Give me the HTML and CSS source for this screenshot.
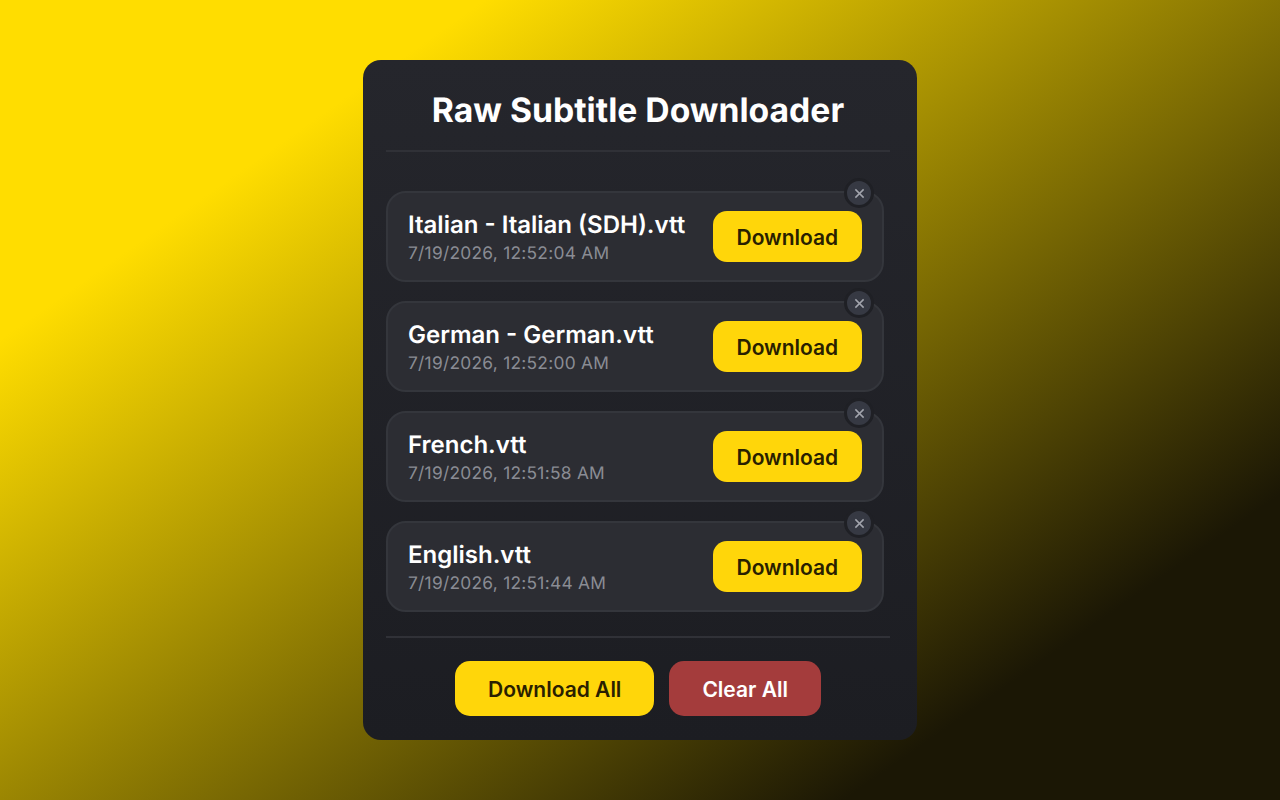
FILE: index.html
```html
<!DOCTYPE html>
<html lang="en">
<head>
<meta charset="utf-8">
<title>Raw Subtitle Downloader</title>
<link rel="stylesheet" href="styles.css">
</head>
<body>
<main class="panel">
  <h1 class="title">Raw Subtitle Downloader</h1>
  <ul class="list">
    <li class="item">
      <div class="info"><div class="name">Italian - Italian (SDH).vtt</div><div class="date">7/19/2026, 12:52:04 AM</div></div>
      <button class="btn btn-yellow item-btn">Download</button>
      <button class="close" aria-label="Remove"><svg viewBox="0 0 12 12" class="x"><path d="M1.5 1.5l9 9M10.5 1.5l-9 9"/></svg></button>
    </li>
    <li class="item">
      <div class="info"><div class="name">German - German.vtt</div><div class="date">7/19/2026, 12:52:00 AM</div></div>
      <button class="btn btn-yellow item-btn">Download</button>
      <button class="close" aria-label="Remove"><svg viewBox="0 0 12 12" class="x"><path d="M1.5 1.5l9 9M10.5 1.5l-9 9"/></svg></button>
    </li>
    <li class="item">
      <div class="info"><div class="name">French.vtt</div><div class="date">7/19/2026, 12:51:58 AM</div></div>
      <button class="btn btn-yellow item-btn">Download</button>
      <button class="close" aria-label="Remove"><svg viewBox="0 0 12 12" class="x"><path d="M1.5 1.5l9 9M10.5 1.5l-9 9"/></svg></button>
    </li>
    <li class="item">
      <div class="info"><div class="name">English.vtt</div><div class="date">7/19/2026, 12:51:44 AM</div></div>
      <button class="btn btn-yellow item-btn">Download</button>
      <button class="close" aria-label="Remove"><svg viewBox="0 0 12 12" class="x"><path d="M1.5 1.5l9 9M10.5 1.5l-9 9"/></svg></button>
    </li>
  </ul>
  <footer class="footer">
    <button class="btn btn-yellow foot-btn">Download All</button>
    <button class="btn btn-red foot-btn">Clear All</button>
  </footer>
</main>
</body>
</html>
```
FILE: styles.css
```css
* { box-sizing: border-box; }
html, body { height: 100%; }
body {
  margin: 0;
  display: flex;
  align-items: center;
  justify-content: center;
  font-family: Inter, "Liberation Sans", sans-serif;
  text-rendering: geometricPrecision;
  background: linear-gradient(145deg, #ffdd00 20%, #1b1705 82%);
}
.panel {
  width: 554px;
  height: 680px;
  padding: 23px 27px 23px 23px;
  border-radius: 18px;
  background: linear-gradient(180deg, #25262c 0%, #1c1d22 100%);
  display: flex;
  flex-direction: column;
}
.title {
  margin: 0;
  height: 69px;
  padding-top: 5px;
  text-align: center;
  font-size: 33.7px;
  line-height: 46px;
  font-weight: 700;
  color: #fff;
  border-bottom: 2px solid #303137;
}
.list {
  list-style: none;
  margin: 0;
  padding: 38.7px 6px 24px 0;
  display: flex;
  flex-direction: column;
  gap: 18.4px;
  flex: none;
  border-bottom: 2px solid #303137;
}
.item {
  position: relative;
  height: 91.6px;
  padding: 0 20px;
  display: flex;
  align-items: center;
  justify-content: space-between;
  border: 2px solid #34363c;
  border-radius: 20px;
  background: #2c2d33;
}
.info { padding-top: 4.5px; }
.name { font-size: 24px; line-height: 30px; font-weight: 600; color: #fff; }
.date { margin-top: 1.5px; font-size: 17.33px; line-height: 26px; letter-spacing: 0.27px; color: #8a8c94; }
.btn {
  border: 0;
  padding: 3px 0 0;
  font-family: inherit;
  font-weight: 600;
}
.btn-yellow { background: #ffd60a; color: #2a1f00; }
.btn-red { background: #a43c3c; color: #fff; }
.item-btn { width: 149.3px; height: 51.7px; border-radius: 14px; font-size: 21px; }
.footer {
  padding-top: 23px;
  display: flex;
  justify-content: center;
  gap: 15px;
}
.foot-btn { height: 54.3px; padding-right: 33px; padding-left: 33px; border-radius: 15px; font-size: 21px; }
.close {
  position: absolute;
  top: -14.5px;
  right: 8px;
  width: 30px;
  height: 30px;
  padding: 0;
  border: 3px solid #1f2025;
  border-radius: 50%;
  background: #363943;
  display: flex;
  align-items: center;
  justify-content: center;
}
.x { width: 11px; height: 11px; fill: none; stroke: #a3a5ad; stroke-width: 1.6; }
```
